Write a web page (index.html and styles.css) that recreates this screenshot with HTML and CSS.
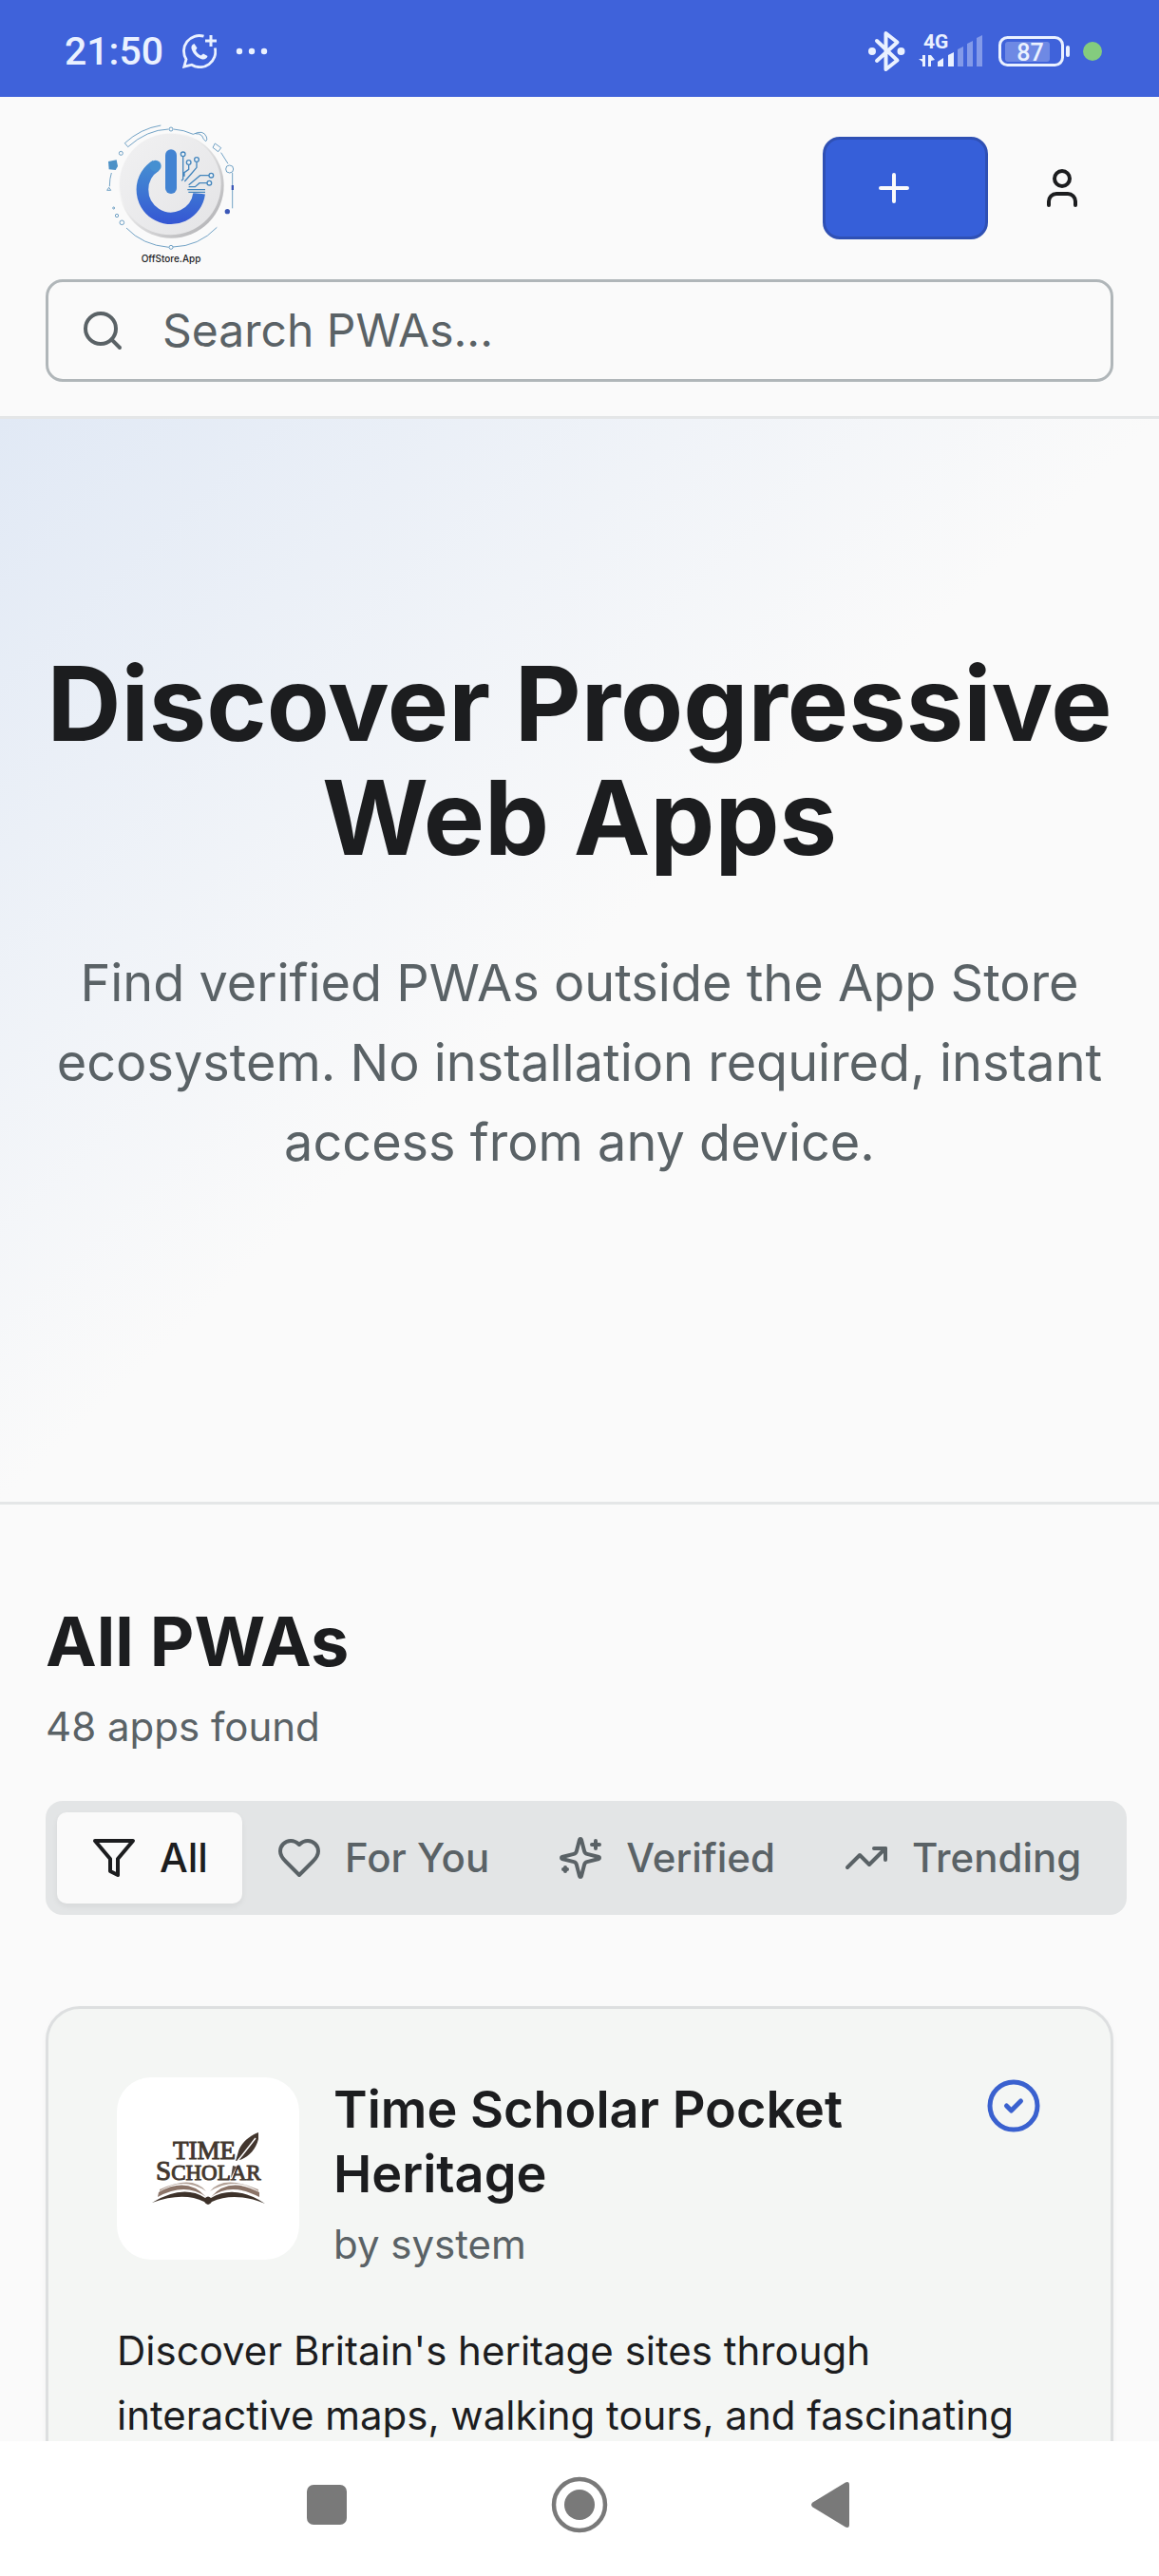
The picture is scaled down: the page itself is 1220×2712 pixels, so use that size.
FILE: index.html
```html
<!DOCTYPE html>
<html lang="en">
<head>
<meta charset="utf-8">
<meta name="viewport" content="width=device-width">
<title>OffStore.App</title>
<link rel="stylesheet" href="styles.css">
</head>
<body>
<div class="status">
  <div class="status-left">
    <span class="clock">21:50</span>
    <svg class="whatsapp" viewBox="0 0 36 36" fill="none" stroke="#eaf1ff" stroke-width="2.8">
      <path d="M22.500 2.200A16.300 16.300 0 0 0 4 26.500L1.800 34.200L9.800 32.200A16.300 16.300 0 0 0 34.300 14.500"/>
      <path d="M30 1v12M24 7h12" stroke-width="3"/>
      <path d="M12.500 10c-2 .5-3.500 2.500-3 5 1.500 5.500 6 10 11.500 11.500 2.500.5 5-1 5.500-3.500l-4.500-2.500-2.500 2c-2.500-1-4.500-3-5.500-5.500l1.500-2.500z" fill="#eaf1ff" stroke="none"/>
    </svg>
    <svg class="dots" viewBox="0 0 34 8" fill="#eaf1ff"><circle cx="4" cy="4" r="3.200"/><circle cx="17" cy="4" r="3.200"/><circle cx="30" cy="4" r="3.200"/></svg>
  </div>
  <div class="status-right">
    <svg class="bluetooth" viewBox="0 0 40 44" fill="none" stroke="#eaf1ff" stroke-width="4" stroke-linejoin="round" stroke-linecap="round">
      <path d="M9 11L30.500 31.500L18.500 41V3L30.500 12.500L9 32"/>
      <circle cx="4" cy="22" r="2" fill="#eaf1ff"/><circle cx="34.500" cy="22" r="2" fill="#eaf1ff"/>
    </svg>
    <svg class="signal" viewBox="0 -6 70 48" fill="#eaf1ff">
      <text class="network" x="5" y="15">4G</text>
      <path d="M7 22v12h-3v-5l-4-3h4v-4zM10 22h3l4 5-4 1v6h-3z"/>
      <path d="M20 29l6-4v9h-6zM31 22l6-3v15h-6z"/>
      <path d="M41 16l6-3v21h-6zM51 10l6-3v27h-6zM61 4l6-3v33h-6z" opacity=".4"/>
    </svg>
    <svg class="battery" viewBox="0 0 77 34" fill="#eaf1ff">
      <rect x="2.500" y="2.500" width="66" height="29" rx="8" fill="none" stroke="#eaf1ff" stroke-width="3"/>
      <rect x="8" y="7" width="47" height="21" rx="3" opacity=".28"/>
      <rect x="72" y="11" width="4" height="12" rx="2"/>
      <text class="level" x="34.500" y="27" text-anchor="middle">87</text>
    </svg>
    <span class="live"></span>
  </div>
</div>

<header class="header">
  <div class="topbar">
    <a class="logo" href="#" aria-label="OffStore.App home">
      <svg viewBox="0 -6 540 540" fill="none">
        <defs>
          <linearGradient id="power" x1="0" y1="140" x2="0" y2="375" gradientUnits="userSpaceOnUse"><stop offset="0" stop-color="#4b98d0"/><stop offset=".5" stop-color="#3f7bd3"/><stop offset="1" stop-color="#3557d3"/></linearGradient>
          <linearGradient id="disc" x1="0" y1="0" x2="1" y2="1"><stop offset="0" stop-color="#f1f1f2"/><stop offset="1" stop-color="#e4e4e6"/></linearGradient>
          <linearGradient id="rim" x1="0" y1="0" x2="1" y2="1"><stop offset=".3" stop-color="#f6f6f6"/><stop offset="1" stop-color="#a9a9ac"/></linearGradient>
        </defs>
        <circle cx="271" cy="256" r="166" fill="url(#rim)"/>
        <circle cx="268" cy="252" r="160" fill="url(#disc)"/>
        <path d="M222 193A90 90 0 1 0 359 281" stroke="url(#power)" stroke-width="38"/>
        <circle cx="221" cy="194" r="18" fill="#4690d1"/>
        <path d="M316 262h66v18h-66z" fill="#e9e9ea"/>
        <path d="M270 160V264" stroke="#4283d2" stroke-width="36" stroke-linecap="round"/>
        <g stroke="#4586bd" stroke-width="4">
          <path d="M308 164v72l-5 5M326 190v15l-14 10v12M351 181v18l-17 20-21 24M390 224h-28l-36 30M385 248h-25l-14 12h-20M322 269h56M325 277h53"/>
          <g fill="#edf2f6"><circle cx="308" cy="157" r="7"/><circle cx="326" cy="183" r="7"/><circle cx="351" cy="174" r="7"/><circle cx="397" cy="224" r="7"/><circle cx="391" cy="248" r="7"/></g>
        </g>
        <g stroke="#5790ba" stroke-width="2.500">
          <path d="M238 66Q174 76 124 122l10 12Q194 80 262 78"/>
          <path d="M278 78Q310 80 340 94Q372 78 382 102Q386 112 380 116Q372 112 368 99Q360 91 347 92"/>
          <path d="M409 123l19 14-9 12-17-13zM428 152l22 35M464 216v112M415 388Q358 448 276 450M263 451Q180 444 129 390M76 259Q76 234 82 216"/>
          <circle cx="270" cy="78" r="6"/><circle cx="112" cy="154" r="6"/><circle cx="455" cy="204" r="12"/><circle cx="115" cy="373" r="7"/><circle cx="99" cy="351" r="5"/><circle cx="270" cy="451" r="6"/><circle cx="89" cy="327" r="3"/>
          <path d="M68 271l6-9 6 9z"/>
        </g>
        <path d="M72 180l26-5 4 20-7 12-21-2z" fill="#4c91c7"/>
        <path d="M461 255h7v15h-7z" fill="#3b57b7"/><circle cx="448" cy="338" r="8" fill="#3b57b7"/>
        <text class="brand" x="270" y="497" text-anchor="middle">OffStore.App</text>
      </svg>
    </a>
    <div class="actions">
      <button class="add" type="button" aria-label="Add app">
        <svg class="icon" viewBox="0 0 24 24"><path d="M5 12h14M12 5v14"/></svg>
      </button>
      <button class="account" type="button" aria-label="Account">
        <svg class="icon" viewBox="0 0 24 24"><path d="M19 21v-2a4 4 0 0 0-4-4H9a4 4 0 0 0-4 4v2"/><circle cx="12" cy="7" r="4"/></svg>
      </button>
    </div>
  </div>
  <label class="search">
    <svg class="icon" viewBox="0 0 24 24"><circle cx="11" cy="11" r="8"/><path d="m21 21-4.300-4.300"/></svg>
    <input type="search" placeholder="Search PWAs..." aria-label="Search PWAs">
  </label>
</header>

<main class="main">
  <section class="hero">
    <h1>Discover Progressive Web Apps</h1>
    <p>Find verified PWAs outside the App Store ecosystem. No installation required, instant access from any device.</p>
  </section>

  <section class="list">
    <h2>All PWAs</h2>
    <p class="muted">48 apps found</p>
    <div class="tabs" role="tablist">
      <button class="tab active" type="button" role="tab" aria-selected="true">
        <svg class="icon" viewBox="0 0 24 24"><path d="M22 3H2l8 9.460V19l4 2v-8.540L22 3z"/></svg>All
      </button>
      <button class="tab" type="button" role="tab" aria-selected="false">
        <svg class="icon" viewBox="0 0 24 24"><path d="M19 14c1.490-1.460 3-3.210 3-5.500A5.500 5.500 0 0 0 16.500 3c-1.760 0-3 .5-4.500 2-1.500-1.500-2.740-2-4.500-2A5.500 5.500 0 0 0 2 8.500c0 2.300 1.500 4.050 3 5.500l7 7Z"/></svg>For You
      </button>
      <button class="tab" type="button" role="tab" aria-selected="false">
        <svg class="icon" viewBox="0 0 24 24"><path d="M9.937 15.500A2 2 0 0 0 8.500 14.063l-6.135-1.582a.5.5 0 0 1 0-.962L8.500 9.936A2 2 0 0 0 9.937 8.500l1.582-6.135a.5.5 0 0 1 .963 0L14.063 8.500A2 2 0 0 0 15.500 9.937l6.135 1.581a.5.5 0 0 1 0 .964L15.500 14.063a2 2 0 0 0-1.437 1.437l-1.582 6.135a.5.5 0 0 1-.963 0z"/><path d="M20 3v4M22 5h-4M4 17v2M5 18H3"/></svg>Verified
      </button>
      <button class="tab" type="button" role="tab" aria-selected="false">
        <svg class="icon" viewBox="0 0 24 24"><path d="M22 7 13.500 15.500l-5-5L2 17"/><path d="M16 7h6v6"/></svg>Trending
      </button>
    </div>

    <article class="card">
      <div class="card-head">
        <svg class="app-icon" viewBox="0 0 192 192" role="img" aria-label="Time Scholar">
          <g class="scholar">
            <text x="59" y="86" font-size="27">TIME</text>
            <text x="41" y="108" font-size="29">S<tspan font-size="23">CHOLAR</tspan></text>
          </g>
          <path d="M149 58c-9 3-19 12-21 20l-3 10c10-1 21-10 24-23z" fill="#43362e"/>
          <path d="M146 64L128 87L120 107" fill="none" stroke="#fff" stroke-width="1.500"/>
          <path d="M122 93l4 1-6 12z" fill="#5a4b42"/>
          <path d="M45 110v10Q70 104 94 120Q80 102 45 118zM149 110v10Q124 104 98 120Q112 102 149 118z" fill="#b3a298"/>
          <path d="M43 126Q72 110 94 126Q74 104 44 121zM150 126Q120 110 99 126Q118 104 150 121z" fill="#8b7468"/>
          <path d="M37 132Q70 112 93 127Q96 124 99 127Q124 112 156 133Q124 120 100 131Q96 137 92 131Q70 120 37 132z" fill="#3d3129"/>
        </svg>
        <div class="card-title">
          <h3>Time Scholar Pocket Heritage</h3>
          <p class="muted">by system</p>
        </div>
        <svg class="icon verified" viewBox="0 0 24 24" role="img" aria-label="Verified"><circle cx="12" cy="12" r="10"/><path d="m9 12 2 2 4-4"/></svg>
      </div>
      <p class="desc">Discover Britain's heritage sites through interactive maps, walking tours, and fascinating</p>
    </article>
  </section>
</main>

<nav class="navbar" aria-label="System">
  <button type="button" aria-label="Recent apps"><svg viewBox="0 0 60 60"><rect x="9" y="9" width="42" height="42" rx="7"/></svg></button>
  <button type="button" aria-label="Home"><svg viewBox="0 0 60 60"><circle cx="30" cy="30" r="27" fill="none" stroke="#797979" stroke-width="4.500"/><circle cx="30" cy="30" r="16"/></svg></button>
  <button type="button" aria-label="Back"><svg viewBox="0 0 60 60"><path d="M9.500 27.500L44 6.500Q48 5 48 9V51Q48 55 44 53.500L9.500 32.500Q6.500 30 9.500 27.500z"/></svg></button>
</nav>
</body>
</html>
```
FILE: styles.css
```css
* { box-sizing: border-box; margin: 0; }

body {
  display: flex;
  flex-direction: column;
  height: 100vh;
  overflow: hidden;
  background: #fafafa;
  color: #1c1d1f;
  font-family: Inter, "Liberation Sans", sans-serif;
}

button { border: 0; padding: 0; background: none; font: inherit; color: inherit; }

.icon {
  flex: none;
  width: 48px;
  height: 48px;
  fill: none;
  stroke: currentColor;
  stroke-width: 2;
  stroke-linecap: round;
  stroke-linejoin: round;
}

/* System status bar */
.status {
  flex: none;
  display: flex;
  justify-content: space-between;
  height: 102px;
  padding: 6px 60px 0 68px;
  background: #3f62da;
  color: #eaf1ff;
  font-family: Roboto, sans-serif;
}
.status-left, .status-right { display: flex; align-items: center; }
.status-left { gap: 20px; }
.status-right { gap: 13px; }
.clock { font-size: 41px; line-height: 48px; font-weight: 500; }
.whatsapp { width: 36px; height: 36px; }
.dots { width: 34px; height: 8px; }
.bluetooth { width: 40px; height: 44px; }
.signal { width: 70px; height: 48px; }
.battery { width: 77px; height: 34px; }
.network { font-size: 21px; font-weight: 700; }
.level { font-size: 25px; font-weight: 500; }
.live { width: 20px; height: 20px; border-radius: 50%; background: #84cc7e; }

/* App header */
.header {
  flex: none;
  padding: 0 48px 36px;
  border-bottom: 3px solid #e4e6e7;
}
.topbar {
  display: flex;
  align-items: center;
  justify-content: space-between;
  height: 192px;
}
.logo { margin-left: 42px; }
.logo svg { display: block; width: 180px; height: 180px; }
.brand { font-size: 30px; font-weight: 500; fill: #1c1d1f; }
.actions { display: flex; gap: 24px; }
.add {
  height: 108px;
  padding: 0 72px 0 48px;
  border: 3px solid #2f50b4;
  border-radius: 18px;
  background: #365fd9;
  color: #fafafa;
}
.add .icon, .account .icon { display: block; }
.account {
  display: grid;
  place-items: center;
  width: 108px;
  height: 108px;
}
.search {
  display: flex;
  align-items: center;
  gap: 39px;
  height: 108px;
  padding: 0 36px 0 33px;
  border: 3px solid #b0b6b9;
  border-radius: 18px;
  color: #5a6266;
}
.search input {
  flex: 1;
  min-width: 0;
  padding: 0;
  border: 0;
  outline: 0;
  background: none;
  color: inherit;
  font: 48px/72px Inter, sans-serif;
}
.search input::placeholder { color: inherit; opacity: 1; }

/* Page content */
.main { flex: 1; min-height: 0; overflow: hidden; }
.hero {
  padding: 240px 48px 336px;
  border-bottom: 3px solid #e4e6e7;
  background: linear-gradient(to bottom right, #e1e9f5, #fafafa 50%);
  text-align: center;
}
.hero h1 { font-size: 108px; line-height: 120px; font-weight: 700; }
.hero p { margin-top: 72px; font-size: 54px; line-height: 84px; color: #5a6266; }

.list { padding: 96px 48px; }
.list h2 { margin-bottom: 12px; font-size: 72px; line-height: 96px; font-weight: 700; }
.muted { font-size: 42px; line-height: 60px; color: #5a6266; }

.tabs {
  display: flex;
  width: max-content;
  margin: 48px 0 96px;
  padding: 12px;
  border-radius: 18px;
  background: #e3e5e6;
}
.tab {
  display: flex;
  align-items: center;
  gap: 24px;
  height: 96px;
  padding: 0 36px;
  border-radius: 10px;
  font-size: 42px;
  line-height: 60px;
  font-weight: 500;
  color: #5a6266;
}
.tab.active {
  background: #fafafa;
  color: #1c1d1f;
  box-shadow: 0 3px 6px rgba(0, 0, 0, .06);
}

.card {
  padding: 72px;
  border: 3px solid #dddfe0;
  border-radius: 36px;
  background: #f4f6f4;
  box-shadow: 0 3px 6px rgba(0, 0, 0, .04);
}
.card-head {
  display: flex;
  align-items: flex-start;
  gap: 36px;
  margin-bottom: 48px;
}
.app-icon {
  flex: none;
  width: 192px;
  height: 192px;
  border-radius: 36px;
  background: #fff;
}
.scholar {
  fill: #43382f;
  stroke: #43382f;
  stroke-width: 1;
  font-family: "Liberation Serif", serif;
}
.card-title { flex: 1; }
.card-title h3 { margin-bottom: 10px; font-size: 54px; line-height: 68px; font-weight: 600; }
.verified { width: 60px; height: 60px; color: #3a61cf; }
.desc { font-size: 42px; line-height: 68px; }

/* System navigation bar */
.navbar {
  flex: none;
  display: flex;
  justify-content: center;
  height: 142px;
  padding-bottom: 8px;
  background: #fff;
}
.navbar button {
  display: grid;
  place-items: center;
  width: 266px;
}
.navbar svg { width: 60px; height: 60px; fill: #797979; }
```
